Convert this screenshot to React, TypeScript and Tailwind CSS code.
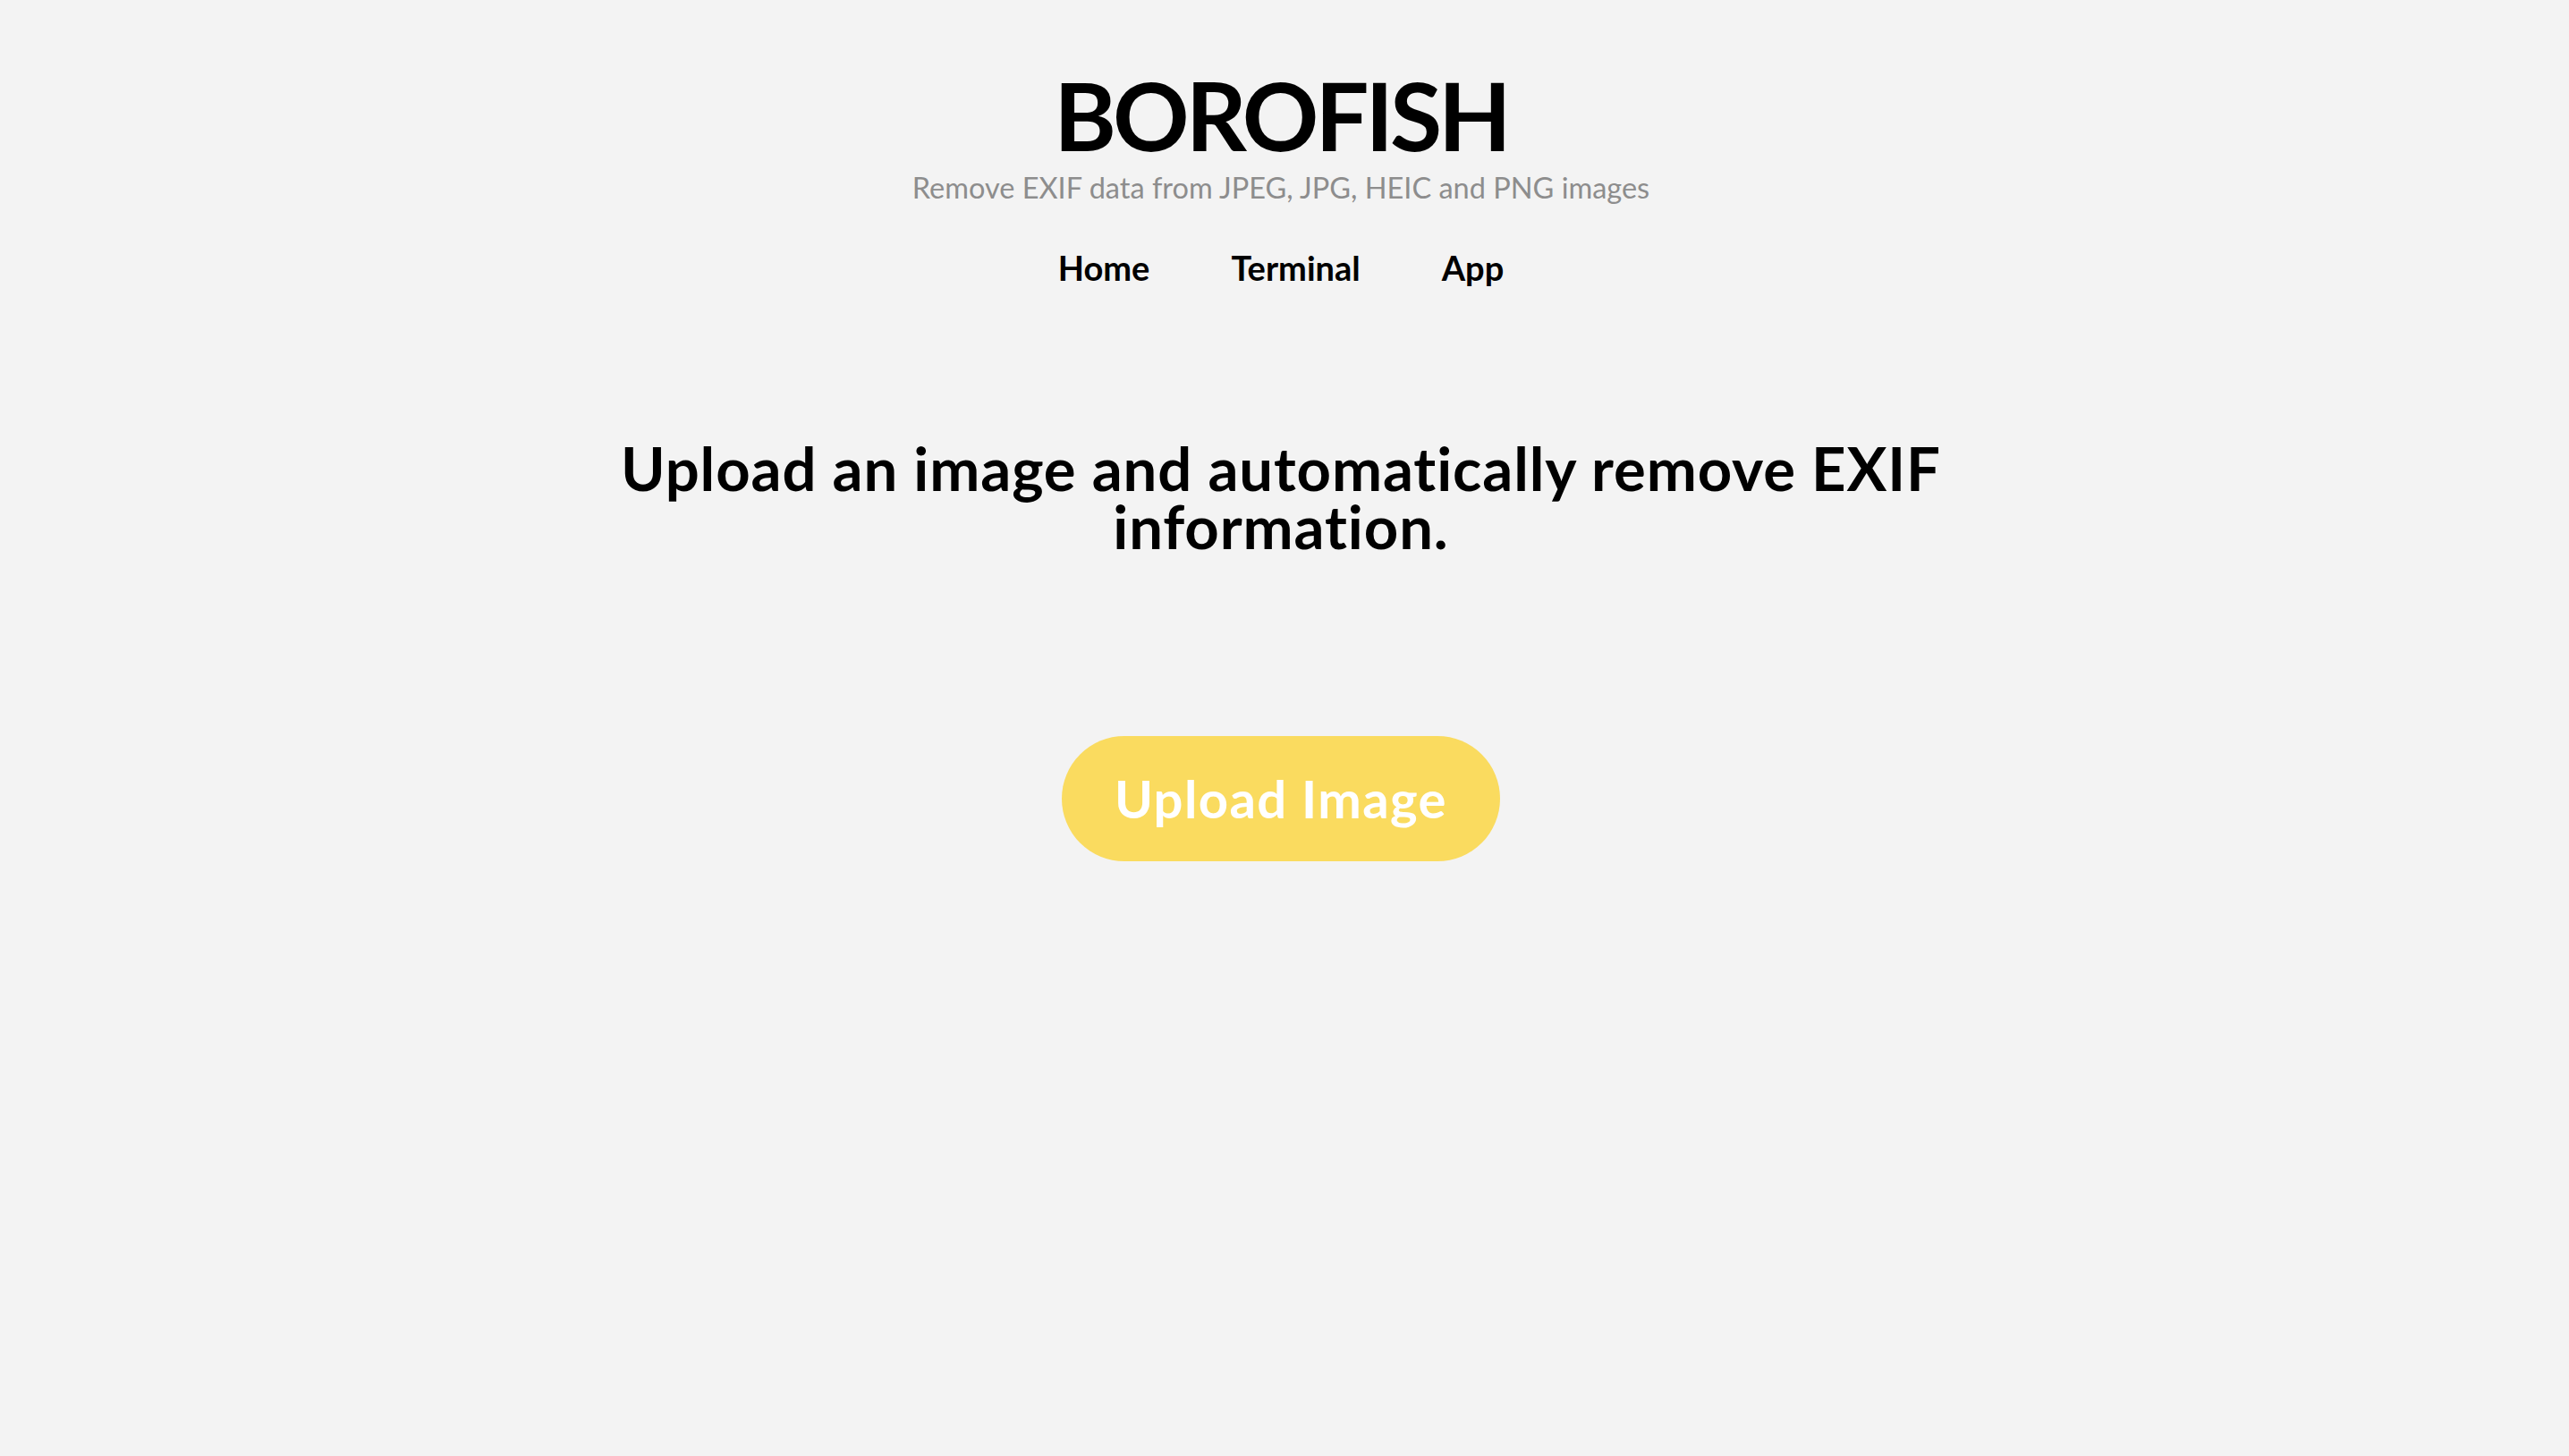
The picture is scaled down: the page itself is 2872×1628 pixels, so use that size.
const NAV = ["Home", "Terminal", "App"];

// 업로드 랜딩 — 로고, 부제, 내비게이션, 안내 문구, 업로드 버튼
const App = () => {
  return (
    <div className="min-h-screen bg-[#f3f3f3] pr-[8px] text-black font-['Lato','Noto_Sans',sans-serif] flex flex-col items-center">
      <header className="flex flex-col items-center pt-[68px]">
        <h1 className="text-[106px] leading-[1.15] font-bold tracking-[-4px]">BOROFISH</h1>
        <p className="text-[32.5px] leading-[1.2] text-[#8d8d8d]">
          Remove EXIF data from JPEG, JPG, HEIC and PNG images
        </p>
        <nav className="mt-[48px] flex items-center gap-[91px] text-[38px] leading-[1.2] font-bold">
          {NAV.map((n) => (
            <a key={n} href="#" className="text-black">
              {n}
            </a>
          ))}
        </nav>
      </header>

      <main className="flex flex-col items-center">
        <h2 className="mt-[169px] flex flex-col items-center text-center text-[67px] leading-[65px] tracking-[0.9px] font-bold">
          <span className="block">Upload an image and automatically remove EXIF</span>
          <span className="block">information.</span>
        </h2>
        <button className="mt-[202px] h-[140px] w-[490px] rounded-full bg-[#fadb5f] text-white text-[58px] leading-none tracking-[1.4px] font-bold">
          Upload Image
        </button>
      </main>
    </div>
  );
};

export default App;
